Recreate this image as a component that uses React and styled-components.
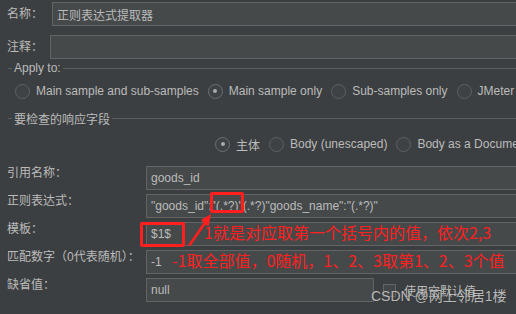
import React from 'react';
import styled, { createGlobalStyle } from 'styled-components';

const GlobalStyle = createGlobalStyle`
  html, body {
    margin: 0;
    padding: 0;
  }
  body {
    background: #3c3f41;
    color: #bbbbbb;
    font-family: "Liberation Sans", "Noto Sans CJK SC", sans-serif;
    font-size: 12px;
    overflow: hidden;
  }
`;

const Page = styled.div`
  position: relative;
  width: 516px;
  height: 314px;
  box-sizing: border-box;
  padding-top: 2px;
  overflow: hidden;
`;

const Row = styled.div`
  display: flex;
  align-items: ${(p) => (p.$top ? 'flex-start' : 'center')};
  height: 24px;
  margin-top: ${(p) => p.$mt || 0}px;
`;

const Label = styled.div`
  flex: none;
  width: ${(p) => p.$w}px;
  box-sizing: border-box;
  padding-left: 7px;
  line-height: 14px;
  white-space: nowrap;
`;

const Field = styled.div`
  flex: ${(p) => (p.$w ? 'none' : 1)};
  width: ${(p) => (p.$w ? `${p.$w}px` : 'auto')};
  height: 24px;
  box-sizing: border-box;
  margin-right: ${(p) => (p.$w ? 0 : -2)}px;
  padding: 0 4px;
  border: 1px solid #646464;
  background: #45494a;
  display: flex;
  align-items: center;
  white-space: nowrap;
  overflow: hidden;
`;

const Legend = styled.div`
  display: flex;
  align-items: center;
  height: 14px;
  margin: ${(p) => p.$mt}px 0 0 8px;
  white-space: nowrap;

  &::before {
    content: '';
    width: 4px;
    height: 1px;
    margin-right: 2px;
    background: #5b5e60;
  }

  &::after {
    content: '';
    flex: 1;
    height: 1px;
    margin-left: 2px;
    background: #5b5e60;
  }
`;

const RadioRow = styled.div`
  display: flex;
  align-items: center;
  height: 16px;
  margin-top: ${(p) => p.$mt}px;
  padding-left: ${(p) => p.$pl}px;
  white-space: nowrap;
`;

const RadioItem = styled.label`
  display: flex;
  align-items: center;
  margin-right: 9px;
`;

const RadioDot = styled.span`
  flex: none;
  width: 15px;
  height: 15px;
  box-sizing: border-box;
  margin-right: 6px;
  border-radius: 50%;
  border: 1px solid ${(p) => (p.$on ? '#6c6f71' : '#5e6163')};
  background: #3f4244;
  display: flex;
  align-items: center;
  justify-content: center;

  &::after {
    content: '';
    width: 4px;
    height: 4px;
    border-radius: 50%;
    background: ${(p) => (p.$on ? '#a9a9a9' : 'transparent')};
  }
`;

const Form = styled.div`
  display: flex;
  flex-direction: column;
  gap: 4px;
  margin-top: 14px;
`;

const CheckBox = styled.span`
  flex: none;
  width: 13px;
  height: 13px;
  box-sizing: border-box;
  margin: 0 8px 0 9px;
  border: 1px solid #646464;
  background: #43474a;
  align-self: center;
`;

const CheckText = styled.span`
  align-self: center;
  white-space: nowrap;
`;

const RedBox = styled.div`
  position: absolute;
  left: ${(p) => p.$x}px;
  top: ${(p) => p.$y}px;
  width: ${(p) => p.$w}px;
  height: ${(p) => p.$h}px;
  box-sizing: border-box;
  border: 3px solid #ff1f1f;
  border-radius: 2px;
`;

const Note = styled.div`
  position: absolute;
  left: ${(p) => p.$x}px;
  top: ${(p) => p.$y}px;
  font-family: "Noto Sans CJK SC", "Liberation Sans", sans-serif;
  font-size: 16px;
  line-height: 20px;
  color: #ff2020;
  white-space: nowrap;
`;

const Arrow = styled.svg`
  position: absolute;
  left: 180px;
  top: 205px;
`;

const Watermark = styled.div`
  position: absolute;
  left: 371px;
  top: 287px;
  font-family: "Liberation Sans", "Noto Sans CJK SC", sans-serif;
  font-size: 14px;
  line-height: 18px;
  color: rgba(225, 225, 225, 0.78);
  text-shadow: 0 0 1px rgba(0, 0, 0, 0.45);
  white-space: nowrap;
`;

const applyTo = [
  { text: 'Main sample and sub-samples' },
  { text: 'Main sample only', on: true },
  { text: 'Sub-samples only' },
  { text: 'JMeter Variable Name to use' },
];

const fields = [
  { text: '主体', on: true },
  { text: 'Body (unescaped)' },
  { text: 'Body as a Document' },
];

const App = () => (
  <Page>
    <GlobalStyle />
    <Row>
      <Label $w={52}>名称：</Label>
      <Field>正则表达式提取器</Field>
    </Row>
    <Row $mt={9}>
      <Label $w={50}>注释：</Label>
      <Field />
    </Row>

    <Legend $mt={2}>Apply to:</Legend>
    <RadioRow $mt={8} $pl={15}>
      {applyTo.map((r) => (
        <RadioItem key={r.text}>
          <RadioDot $on={r.on} />
          {r.text}
        </RadioItem>
      ))}
    </RadioRow>

    <Legend $mt={12}>要检查的响应字段</Legend>
    <RadioRow $mt={11} $pl={215}>
      {fields.map((r) => (
        <RadioItem key={r.text}>
          <RadioDot $on={r.on} />
          {r.text}
        </RadioItem>
      ))}
    </RadioRow>

    <Form>
      <Row $top>
        <Label $w={146}>引用名称：</Label>
        <Field>goods_id</Field>
      </Row>
      <Row $top>
        <Label $w={146}>正则表达式：</Label>
        <Field>"goods_id":"(.*?)"(.*?)"goods_name":"(.*?)"</Field>
      </Row>
      <Row $top>
        <Label $w={146}>模板：</Label>
        <Field>$1$</Field>
      </Row>
      <Row $top>
        <Label $w={146}>匹配数字（0代表随机）：</Label>
        <Field>-1</Field>
      </Row>
      <Row $top>
        <Label $w={146}>缺省值：</Label>
        <Field $w={228}>null</Field>
        <CheckBox />
        <CheckText>使用空默认值</CheckText>
      </Row>
    </Form>

    <RedBox $x={210} $y={192} $w={34} $h={21} />
    <RedBox $x={140} $y={222} $w={45} $h={25} />
    <Arrow width="40" height="45" viewBox="180 205 40 45">
      <polygon points="188,245 190.5,246 205.5,224.5 208.5,226.5 211,214 201,220 203.5,222.5" fill="#ff1f1f" />
    </Arrow>
    <Note $x={204} $y={222}>1就是对应取第一个括号内的值，依次2,3</Note>
    <Note $x={172} $y={250}>-1取全部值，0随机，1、2、3取第1、2、3个值</Note>
    <Watermark>CSDN @网上邻居1楼</Watermark>
  </Page>
);

export default App;
